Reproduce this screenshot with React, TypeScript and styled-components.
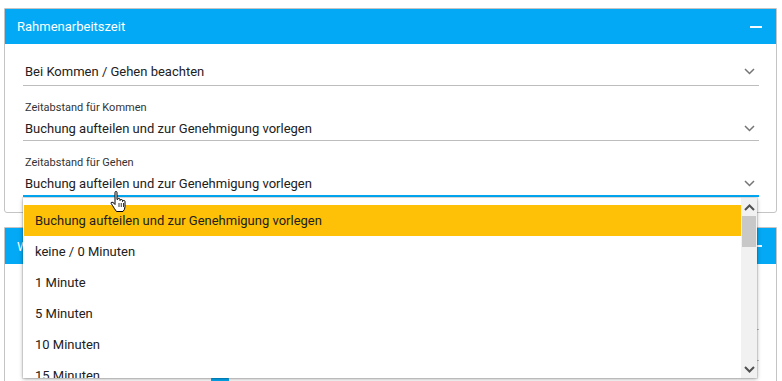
import React, { FC } from "react";
import styled, { createGlobalStyle } from "styled-components";

const BLUE = "#03a9f4";

const GlobalStyle = createGlobalStyle`
  html, body {
    margin: 0;
    padding: 0;
    background: #ffffff;
  }
  body {
    font-family: Roboto, "Liberation Sans", Arial, sans-serif;
    color: #212121;
  }
`;

const Page = styled.div`
  position: relative;
  width: 782px;
  height: 381px;
  overflow: hidden;
  padding: 8px 5px 0 4px;
  box-sizing: border-box;
  display: flex;
  flex-direction: column;
  gap: 14px;
`;

const Card = styled.section`
  border: 1px solid #c4c4c4;
  border-radius: 0 0 3px 3px;
  background: #ffffff;
  flex-shrink: 0;
`;

const Header = styled.header<{ height: number }>`
  height: ${({ height }) => height}px;
  background: ${BLUE};
  color: #ffffff;
  display: flex;
  align-items: center;
  justify-content: space-between;
  padding: 0 14px 0 12px;
  font-size: 13px;
`;

const Minus = styled.span`
  width: 12px;
  height: 2px;
  background: #ffffff;
  opacity: 0.95;
`;

const Body = styled.div<{ bottom: number }>`
  position: relative;
  padding: 0 17px ${({ bottom }) => bottom}px 18px;
`;

const Field = styled.div<{ top: number; bottom: number; focused?: boolean }>`
  padding-top: ${({ top }) => top}px;
  padding-bottom: ${({ bottom }) => bottom}px;
  border-bottom: ${({ focused }) =>
    focused ? `2px solid ${BLUE}` : "1px solid #bdbdbd"};
`;

const Anchor = styled.div`
  position: relative;
`;

const Label = styled.div`
  font-size: 11px;
  line-height: 14px;
  color: #333333;
  padding-left: 2px;
  margin-bottom: 3px;
`;

const ValueRow = styled.div`
  display: flex;
  align-items: center;
  justify-content: space-between;
  height: 20px;
  font-size: 13px;
  padding-left: 2px;
  padding-right: 4px;
`;

const Menu = styled.div`
  position: absolute;
  left: 0;
  right: 2px;
  top: 100%;
  margin-top: 1px;
  height: 180px;
  background: #ffffff;
  box-shadow: 0 1px 4px rgba(0, 0, 0, 0.35), 0 0 0 1px rgba(0, 0, 0, 0.08);
  display: flex;
  z-index: 5;
`;

const List = styled.ul`
  list-style: none;
  margin: 0;
  padding: 7px 0 0 1px;
  flex: 1;
  overflow: hidden;
`;

const Item = styled.li<{ active?: boolean }>`
  height: 31px;
  line-height: 31px;
  padding-left: 11px;
  font-size: 13px;
  color: #212121;
  background: ${({ active }) => (active ? "#ffc107" : "transparent")};
`;

const ScrollBar = styled.div`
  width: 16px;
  background: #f1f1f1;
  display: flex;
  flex-direction: column;
  align-items: stretch;
`;

const ScrollButton = styled.div`
  height: 18px;
  display: flex;
  align-items: center;
  justify-content: center;
`;

const Thumb = styled.div`
  height: 31px;
  margin: 0 1px;
  background: #c8c8c8;
`;

const Track = styled.div`
  flex: 1;
`;

const Cursor = styled.svg`
  position: absolute;
  left: 110px;
  top: 191px;
  z-index: 10;
`;

const ToggleRow = styled.div`
  padding-top: 16px;
`;

const Toggle = styled.span`
  display: block;
  width: 18px;
  height: 10px;
  margin-left: 188px;
  background: ${BLUE};
  border-radius: 2px;
`;

const Chevron: FC<{ up?: boolean; color?: string; width?: number }> = ({
  up,
  color = "#757575",
  width = 1.5,
}) => (
  <svg width="11" height="7" viewBox="0 0 11 7">
    <path
      d={up ? "M1 6 L5.5 1.5 L10 6" : "M1 1 L5.5 5.5 L10 1"}
      fill="none"
      stroke={color}
      strokeWidth={width}
    />
  </svg>
);

const options = [
  "Buchung aufteilen und zur Genehmigung vorlegen",
  "keine / 0 Minuten",
  "1 Minute",
  "5 Minuten",
  "10 Minuten",
  "15 Minuten",
];

const App: FC = () => {
  return (
    <>
      <GlobalStyle />
      <Page>
        <Card>
          <Header height={35}>
            <span>Rahmenarbeitszeit</span>
            <Minus />
          </Header>
          <Body bottom={15}>
            <Field top={17} bottom={4}>
              <ValueRow>
                <span>Bei Kommen / Gehen beachten</span>
                <Chevron />
              </ValueRow>
            </Field>
            <Field top={15} bottom={2}>
              <Label>Zeitabstand für Kommen</Label>
              <ValueRow>
                <span>Buchung aufteilen und zur Genehmigung vorlegen</span>
                <Chevron />
              </ValueRow>
            </Field>
            <Anchor>
              <Field top={15} bottom={2} focused>
                <Label>Zeitabstand für Gehen</Label>
                <ValueRow>
                  <span>Buchung aufteilen und zur Genehmigung vorlegen</span>
                  <Chevron />
                </ValueRow>
              </Field>
              <Menu>
                <List>
                  {options.map((o, i) => (
                    <Item key={o} active={i === 0}>
                      {o}
                    </Item>
                  ))}
                </List>
                <ScrollBar>
                  <ScrollButton>
                    <Chevron up color="#505050" width={2} />
                  </ScrollButton>
                  <Thumb />
                  <Track />
                  <ScrollButton>
                    <Chevron color="#505050" width={2} />
                  </ScrollButton>
                </ScrollBar>
              </Menu>
            </Anchor>
          </Body>
        </Card>
        <Card>
          <Header height={36}>
            <span>W</span>
            <Minus />
          </Header>
          <Body bottom={20}>
            <Field top={45} bottom={0}>
              <ValueRow />
            </Field>
            <Field top={10} bottom={0}>
              <ValueRow />
            </Field>
            <ToggleRow>
              <Toggle />
            </ToggleRow>
          </Body>
        </Card>
        <Cursor width="17" height="22" viewBox="0 0 17 22">
          <path
            d="M5 1.5 Q5 0.5 6 0.5 Q7 0.5 7 1.5 L7 8.5 L7.5 8.5 Q7.5 7.5 8.75 7.5 Q10 7.5 10 8.5 L10 9.5 Q10 8.5 11.25 8.5 Q12.5 8.5 12.5 9.5 L12.5 10.5 Q12.5 9.5 13.75 9.5 Q15 9.5 15 10.5 L15 15.5 Q15 18.5 13 20.5 L6.5 20.5 Q4.5 18 2.5 14.5 L1.2 12.5 Q0.8 11.3 2 11.2 Q3 11.2 4 12.3 L5 13.5 Z"
            fill="#ffffff"
            stroke="#000000"
            strokeWidth="1"
            strokeLinejoin="round"
          />
          <path
            d="M9 12 L9 16 M11.25 12 L11.25 16 M13.5 12 L13.5 16"
            stroke="#000"
            strokeWidth="0.8"
          />
        </Cursor>
      </Page>
    </>
  );
};

export default App;
